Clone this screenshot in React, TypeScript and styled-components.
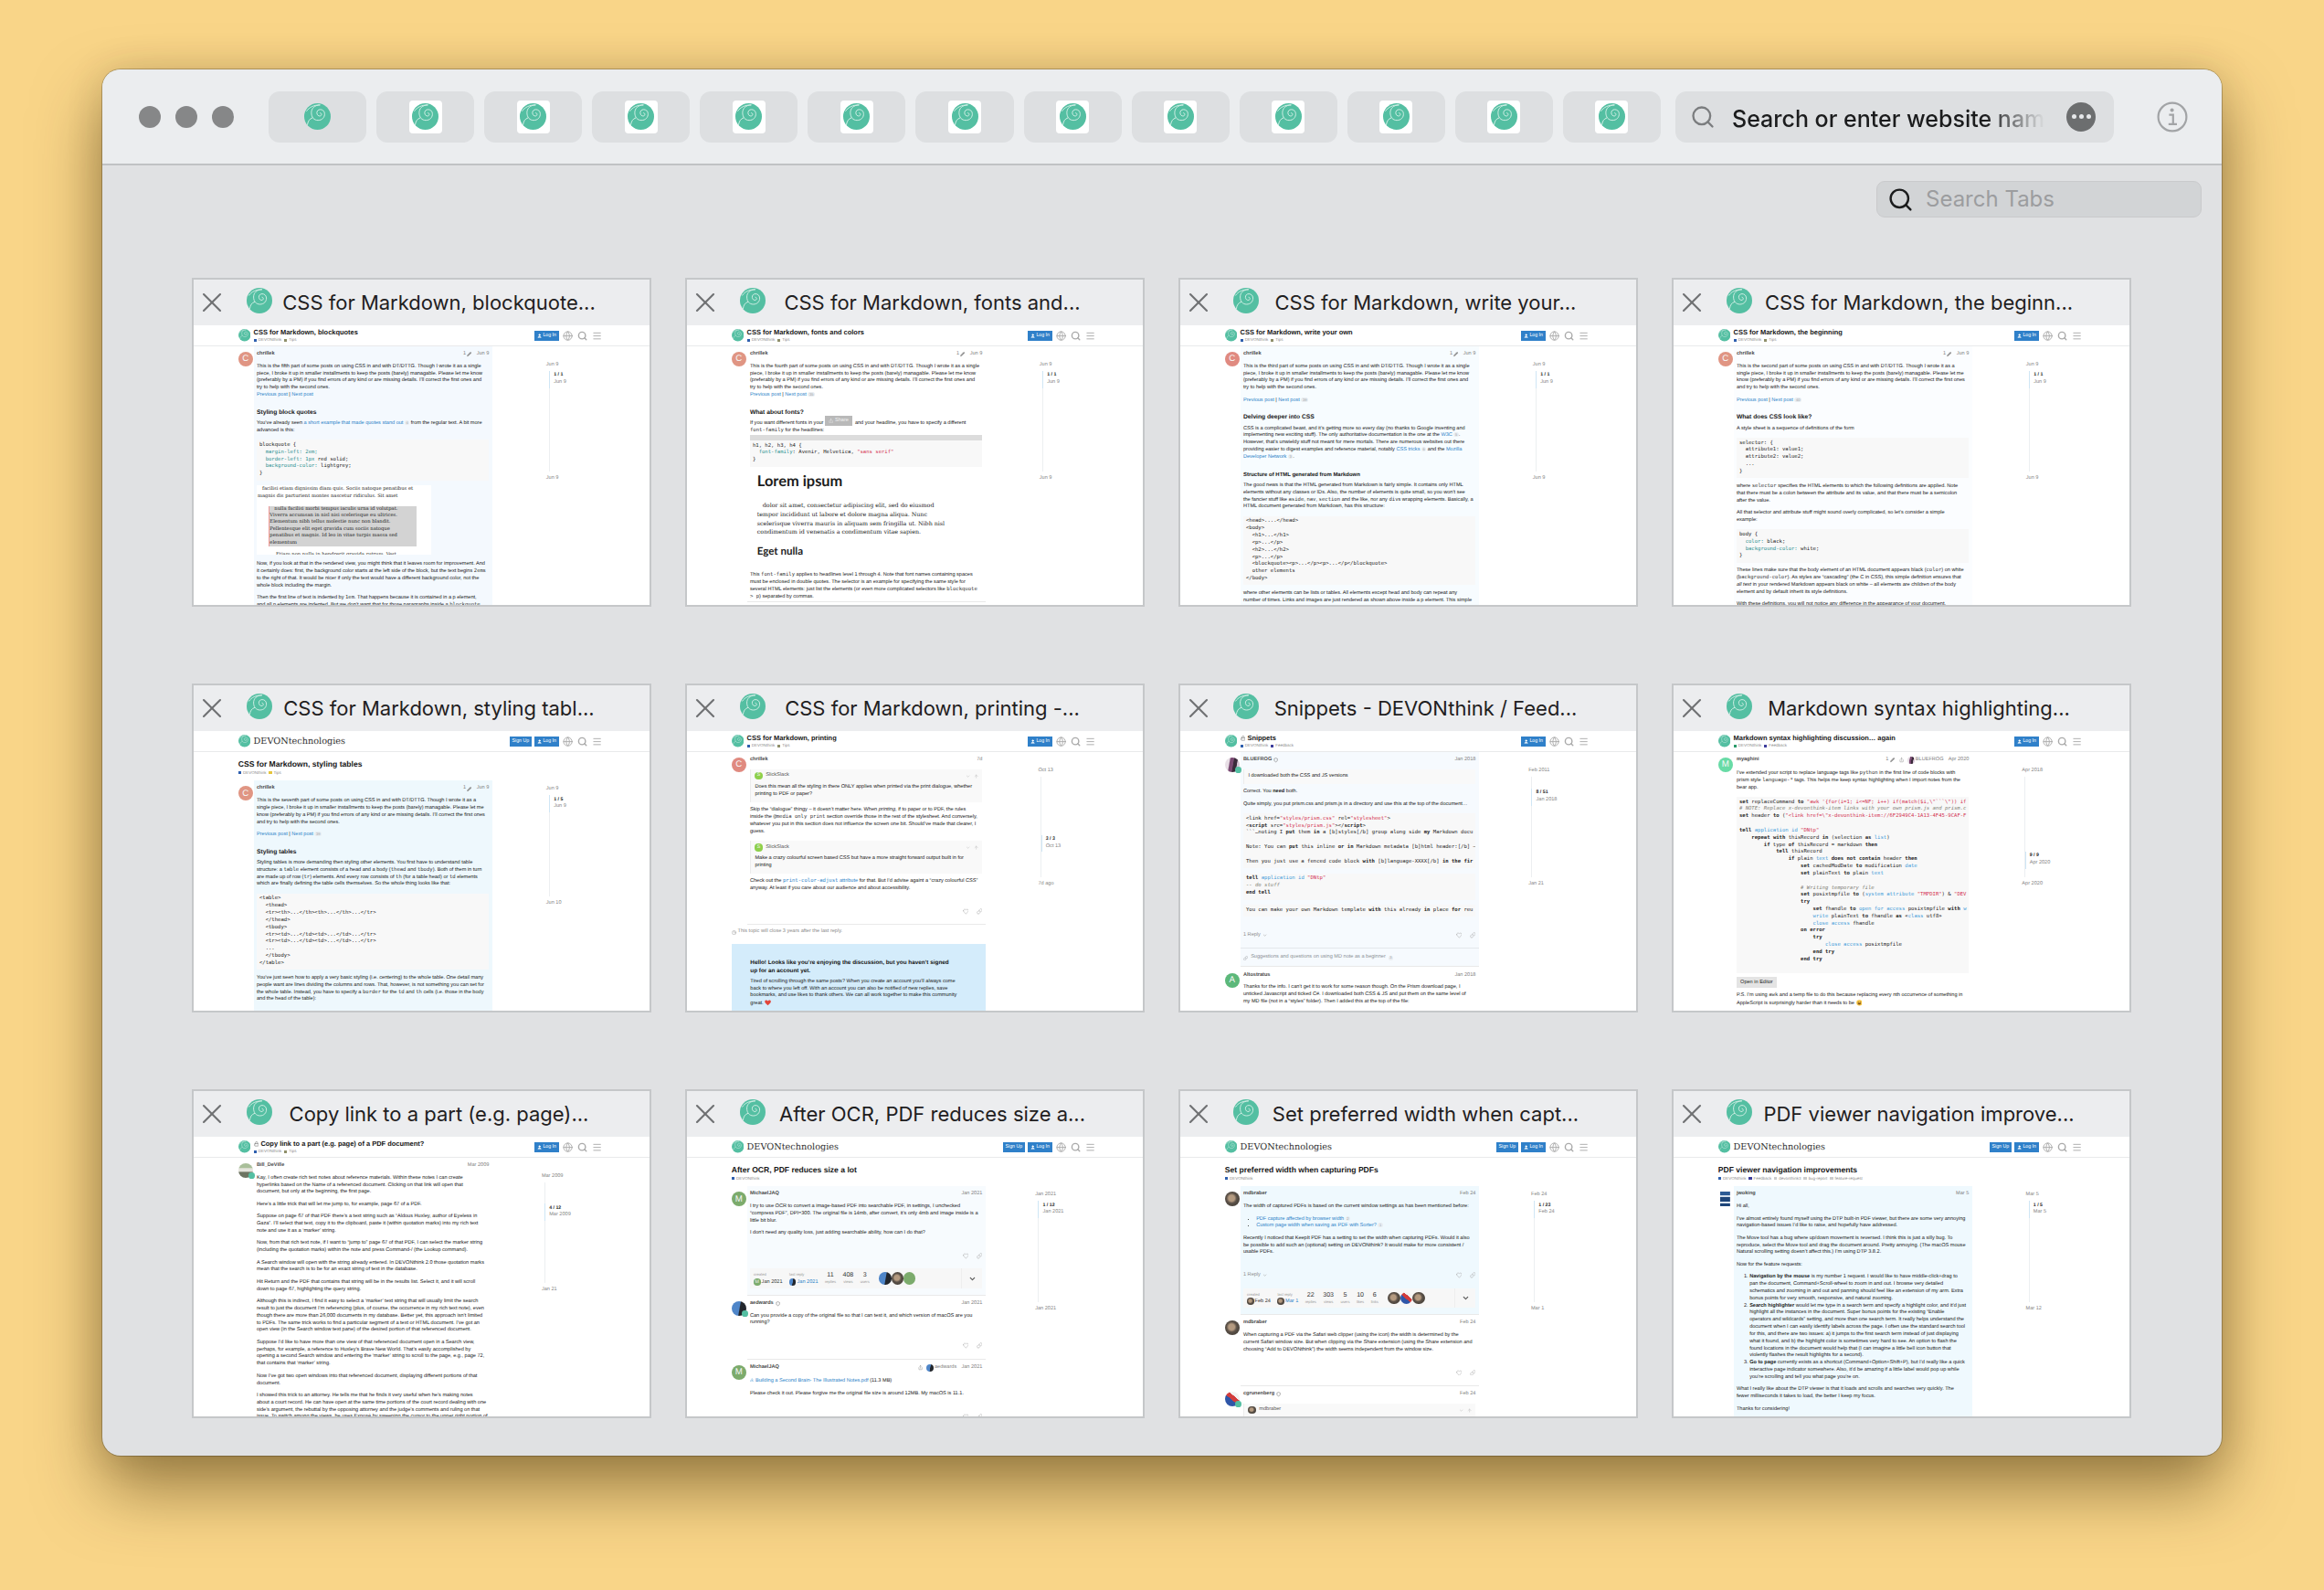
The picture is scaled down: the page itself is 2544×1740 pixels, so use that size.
import React from 'react';
import styled, { createGlobalStyle } from 'styled-components';
import {
  ChevronDown, Clock, Download, Globe, Heart, Link, Lock, Menu, Pencil, Search, Share, Shield, User, ArrowUp, X,
} from 'lucide-react';

const UI = `Inter, "Liberation Sans", sans-serif`;
const SANS = `"Liberation Sans", Arial, sans-serif`;
const MONO = `"DejaVu Sans Mono", "Liberation Mono", monospace`;
const SERIF = `"DejaVu Serif", "Liberation Serif", serif`;
const GREEN = '#54bfa2';

const Global = createGlobalStyle`
  * { box-sizing: border-box; }
  body { margin: 0; background: #f9d588; font-family: ${UI}; }
  h2, h3, h4, p, pre, ul, ol, blockquote { margin: 0; padding: 0; }
  button { font: inherit; border: 0; padding: 0; }
  a { color: inherit; text-decoration: none; }
`;

/* ---------- window ---------- */

const Desktop = styled.div`
  min-height: 100vh;
  padding: 76px 112px 148px;
`;

const Window = styled.main`
  border-radius: 20px;
  overflow: hidden;
  background: #e0e1e3;
  box-shadow: 0 0 0 1px rgba(0, 0, 0, 0.22), 0 36px 72px rgba(60, 40, 0, 0.5), 0 0 40px rgba(60, 40, 0, 0.14);
`;

const Toolbar = styled.header`
  display: flex;
  align-items: center;
  height: 105px;
  padding: 0 37px 0 40px;
  background: #ebedef;
  border-bottom: 2px solid #c0c2c4;
`;

const Lights = styled.div`
  display: flex;
  gap: 16px;
  margin-right: 38px;
`;

const Light = styled.button`
  width: 24px;
  height: 24px;
  border-radius: 50%;
  background: #868788;
`;

const TabStrip = styled.nav`
  flex: 1;
  display: flex;
  gap: 11px;
`;

const Tab = styled.button`
  flex: 1;
  height: 56px;
  border-radius: 12px;
  background: #dddfe1;
  display: flex;
  align-items: center;
  justify-content: center;
`;

const FavTile = styled.span<{ $plain?: boolean }>`
  display: flex;
  align-items: center;
  justify-content: center;
  width: 36px;
  height: 36px;
  border-radius: 4px;
  background: ${(p) => (p.$plain ? 'transparent' : '#fff')};
`;

const AddressBar = styled.label`
  display: flex;
  align-items: center;
  width: 480px;
  height: 56px;
  margin: 0 47px 0 16px;
  padding: 0 20px 0 16px;
  border-radius: 12px;
  background: #dddfe1;
  color: #7b7d7f;
`;

const AddressInput = styled.input`
  flex: 1;
  min-width: 0;
  margin: 4px 20px 0 18px;
  padding: 0;
  border: 0;
  outline: 0;
  background: transparent;
  font: 500 25px/32px ${UI};
  color: #1b1c1d;
  mask-image: linear-gradient(to right, #000 80%, transparent 99%);
  &::placeholder { color: #1b1c1d; opacity: 1; }
`;

const MoreButton = styled.button`
  width: 32px;
  height: 32px;
  border-radius: 50%;
  background: #6c6e6f;
  display: flex;
  align-items: center;
  justify-content: center;
  gap: 3px;
  i { width: 5px; height: 5px; border-radius: 50%; background: #e6e8ea; }
`;

const InfoButton = styled.button`
  display: flex;
  background: transparent;
  color: #a2a4a6;
`;

const SearchRow = styled.div`
  display: flex;
  justify-content: flex-end;
  padding: 17px 22px 0;
`;

const SearchTabs = styled.label`
  display: flex;
  align-items: center;
  gap: 13px;
  width: 356px;
  height: 40px;
  padding: 0 11px;
  border: 1px solid #c9cacc;
  border-radius: 9px;
  background: #d2d4d6;
  color: #1c1d1e;
  input {
    flex: 1;
    min-width: 0;
    padding: 0;
    border: 0;
    outline: 0;
    background: transparent;
    font: 400 24px/30px ${UI};
  }
  input::placeholder { color: #9c9d9f; opacity: 1; }
`;

const Grid = styled.section`
  display: grid;
  grid-template-columns: repeat(4, minmax(0, 1fr));
  gap: 84px 37px;
  padding: 66px 99px 41px 98px;
`;

const Card = styled.article`
  border: 2px solid #c5c7c9;
  background: #fff;
`;

const CardBar = styled.header`
  display: flex;
  align-items: center;
  height: 50px;
  padding: 0 48px 0 2px;
  background: #ecedef;
`;

const CloseButton = styled.button`
  display: flex;
  background: transparent;
  color: #6f7173;
`;

const TabIcon = styled.span`
  display: flex;
  margin: 0 0 4px 20px;
`;

const CardTitle = styled.h2`
  flex: 1;
  min-width: 0;
  text-align: center;
  white-space: nowrap;
  font: 400 22px/30px ${UI};
  color: #1f2021;
`;

/* ---------- page thumbnail: laid out at full size, shown at thumbnail scale ---------- */

const Preview = styled.div`
  height: 306px;
  overflow: hidden;
`;

const Page = styled.div`
  zoom: 0.373;
  font: 15px/21px ${SANS};
  color: #181818;
  text-rendering: geometricPrecision;
`;

const SiteHeader = styled.header`
  height: 61px;
  border-bottom: 2px solid #e9eaeb;
`;

const Wrap = styled.div`
  width: 1076px;
  margin: 0 auto;
`;

const SiteBar = styled(Wrap)`
  height: 60px;
  display: flex;
  align-items: center;
`;

const SiteTitle = styled.div`
  flex: 1;
  margin-left: 9px;
  padding-top: 3px;
`;

const Brand = styled.span`
  font: 400 26px/36px ${SERIF};
  color: #303030;
`;

const Heading = styled.h3<{ $big?: boolean }>`
  display: flex;
  align-items: center;
  gap: 6px;
  font-size: ${(p) => (p.$big ? 23 : 20)}px;
  line-height: ${(p) => (p.$big ? 30 : 24)}px;
  color: #161616;
`;

const Cats = styled.div`
  display: flex;
  gap: 8px;
  font-size: 12px;
  line-height: 20px;
  color: #8c8c8c;
`;

const Cat = styled.span<{ $color: string }>`
  display: flex;
  align-items: center;
  gap: 5px;
  &::before { content: ''; width: 9px; height: 9px; background: ${(p) => p.$color}; }
`;

const SiteButton = styled.button`
  display: flex;
  align-items: center;
  justify-content: center;
  gap: 3px;
  height: 30px;
  margin-right: 8px;
  padding: 0 8px;
  background: #2f80c9;
  color: #fff;
  font-size: 14px;
`;

const SiteIcons = styled.div`
  display: flex;
  gap: 13px;
  margin: 0 8px 0 3px;
  color: #aaa;
`;

const TopicTitle = styled.div`
  height: 84px;
  padding-top: 21px;
`;

const Topic = styled(Wrap)`
  display: flex;
`;

const Stream = styled.div`
  width: 746px;
`;

const PostRow = styled.article`
  display: flex;
`;

const PostSide = styled.div`
  width: 45px;
  padding-top: 17px;
`;

const Avatar = styled.span<{ $bg: string; $size?: number; $square?: boolean }>`
  position: relative;
  display: flex;
  flex: none;
  align-items: center;
  justify-content: center;
  width: ${(p) => p.$size || 43}px;
  height: ${(p) => p.$size || 43}px;
  border-radius: ${(p) => (p.$square ? 0 : '50%')};
  background: ${(p) => p.$bg};
  color: #f6f6f6;
  font-size: ${(p) => (p.$size ? 14 : 26)}px;
`;

const Flair = styled.i`
  position: absolute;
  right: -5px;
  bottom: -2px;
  width: 18px;
  height: 18px;
  border-radius: 50%;
  background: ${GREEN};
`;

const PostBody = styled.div<{ $hl?: string; $last?: boolean }>`
  width: 700px;
  padding: 14px 9px 0;
  background: ${(p) => p.$hl || 'transparent'};
  border-bottom: 1px solid ${(p) => (p.$last ? 'transparent' : '#e9e9e9')};
`;

const NameRow = styled.div`
  display: flex;
  align-items: center;
  gap: 8px;
  height: 22px;
  margin-bottom: 5px;
  color: #808080;
  b { flex: 1; display: flex; align-items: center; gap: 5px; color: #4a4a4a; }
  span { display: flex; align-items: center; gap: 3px; margin-left: 6px; }
`;

const Line = styled.span`
  display: block;
  min-height: 1lh;
`;

const Para = styled.p<{ $mt?: number }>`
  margin-top: ${(p) => p.$mt ?? 15}px;
  white-space: pre;
`;

const Sub = styled.h4<{ $small?: boolean }>`
  margin: 29px 0 -6px;
  font-size: ${(p) => (p.$small ? 16 : 18)}px;
  line-height: 24px;
  color: #161616;
`;

const CodeBox = styled.pre<{ $mt?: number }>`
  margin-top: ${(p) => p.$mt ?? 15}px;
  padding: 7px 8px;
  overflow: hidden;
  background: #f8f8f8;
  font: 15px/21px ${MONO};
  color: #222;
`;

const InlineCode = styled.code`
  font: 15px/20px ${MONO};
  color: #333;
`;

const Anchor = styled.a`
  color: #2a82c8;
  code { color: inherit; }
`;

const Badge = styled.small`
  padding: 0 4px;
  border-radius: 8px;
  background: #e9edf1;
  font-size: 11px;
  line-height: 12px;
  color: #a0a4a8;
`;

const Tok = styled.span<{ $color: string }>`
  color: ${(p) => p.$color};
`;

const QuoteBox = styled.blockquote`
  margin-top: 15px;
  padding: 8px 12px 11px;
  border-left: 5px solid #ececec;
  background: #f9f9f9;
`;

const QuoteHead = styled.div`
  display: flex;
  align-items: center;
  gap: 10px;
  height: 24px;
  margin-bottom: 11px;
  color: #b5b5b5;
  b { flex: 1; font-weight: 400; color: #555; }
`;

const Actions = styled.div`
  display: flex;
  align-items: center;
  gap: 22px;
  height: 30px;
  margin: 40px 0 22px;
  color: #ababab;
  span { flex: 1; display: flex; align-items: center; gap: 6px; color: #8c8c8c; }
`;

const RelatedLink = styled.a`
  display: flex;
  align-items: center;
  gap: 8px;
  margin: 0 -9px;
  padding: 16px 9px 14px;
  border-top: 1px solid #e3e8ec;
  color: #8a9095;
`;

const StatBox = styled.div`
  display: flex;
  align-items: center;
  gap: 20px;
  height: 58px;
  margin-bottom: 18px;
  padding-left: 11px;
  background: #f7f7f7;
  font-size: 14px;
`;

const Stat = styled.div<{ $center?: boolean; $link?: boolean }>`
  display: flex;
  flex-direction: column;
  align-items: ${(p) => (p.$center ? 'center' : 'flex-start')};
  color: ${(p) => (p.$link ? '#2a82c8' : '#333')};
  small { order: ${(p) => (p.$center ? 1 : 0)}; font-size: 11px; line-height: 20px; color: #999; }
  b { display: flex; align-items: center; gap: 3px; font-weight: 400; font-size: ${(p) => (p.$center ? 19 : 15)}px; line-height: 22px; }
`;

const Faces = styled.div`
  flex: 1;
  display: flex;
  margin-left: 8px;
`;

const Expand = styled.button`
  display: flex;
  align-items: center;
  justify-content: center;
  width: 62px;
  height: 58px;
  border-left: 1px solid #eee;
  background: transparent;
  color: #555;
`;

const EditorButton = styled.button`
  display: block;
  height: 32px;
  margin-top: 10px;
  padding: 0 11px;
  background: #e4e4e4;
  color: #222;
`;

const List = styled.ul`
  margin-top: 15px;
  padding-left: 38px;
  white-space: pre;
  li > span:first-child { display: inline-block; vertical-align: top; }
`;

const CloseNote = styled.p`
  display: flex;
  align-items: center;
  gap: 4px;
  padding: 11px 0 24px;
  color: #8a8a8a;
`;

const SignupBox = styled.section`
  padding: 45px 55px 40px;
  background: #d4ecfb;
  white-space: pre;
  h4 { font-size: 17px; line-height: 24px; margin-bottom: 8px; color: #161616; }
`;

const SampleImage = styled.div`
  width: 511px;
  height: 202px;
  margin: 15px 0 20px;
  padding: 3px 3px 0;
  overflow: hidden;
  background: #fff;
  font: 14px/20px ${SERIF};
  white-space: pre;
  color: #222;
`;

const GreyQuote = styled.div`
  width: 434px;
  margin: 17px 0 14px 33px;
  border-left: 1px solid #e99;
  background: #d3d3d3;
`;

const SampleType = styled.div`
  margin: 15px 0 38px;
  padding-left: 21px;
  font: 17px/26px ${SERIF};
  white-space: pre;
  h3 { font: 700 44px/58px Lato, sans-serif; margin-bottom: 30px; color: #1c1c1c; }
  h4 { font: 700 31px/40px Lato, sans-serif; margin-top: 25px; color: #1c1c1c; }
`;

const GreyBar = styled.div`
  height: 17px;
  background: #dcdcdc;
`;

const Selected = styled.span`
  position: relative;
  display: inline-block;
  width: 84px;
  height: 21px;
  vertical-align: top;
`;

const SharePop = styled.button`
  position: absolute;
  left: 0;
  bottom: 5px;
  display: flex;
  align-items: center;
  justify-content: center;
  gap: 4px;
  width: 81px;
  height: 30px;
  background: #b9b9b9;
  color: #f0f0f0;
`;

const Timeline = styled.aside<{ $top: number }>`
  flex: 1;
  display: flex;
  justify-content: center;
  padding: ${(p) => p.$top}px 0 0 44px;
  color: #848484;
`;

const Track = styled.div<{ $offset: number }>`
  height: 295px;
  margin: 8px 0 11px 8px;
  padding-top: ${(p) => p.$offset}px;
  border-left: 2px solid #eceff1;
`;

const Scroller = styled.div`
  margin-left: -2px;
  padding: 3px 0 4px 11px;
  border-left: 3px solid #cfe6f5;
  b { display: block; font-size: 14px; color: #222; }
`;

/* ---------- drawings ---------- */

const Shell = ({ size = 28 }: { size?: number }) => (
  <svg width={size} height={size} viewBox="0 0 28 28" aria-hidden="true">
    <circle cx="14" cy="14" r="14" fill={GREEN} />
    <g fill="none" stroke="#d9f1e9" strokeWidth="0.9" strokeLinecap="round">
      <path d="M3.400 22.600 C4 19 5.400 16.400 8.600 15.400" />
      <path d="M16.400 1.800 C11 2 7.600 5.400 7.600 10 C7.600 14.800 10.400 18 14.600 18 C19 18 21.800 14.800 21.600 11 C21.400 8 19.200 6.600 17 6.600 C14.600 6.600 13.200 8.400 13.400 10.400 C13.600 12.600 15.200 13.800 17 13.400 C18.600 13 18.800 10.400 17 10.200" />
      <path d="M2.600 8.200 C5.400 4.200 10 1.800 16.400 1.800" />
    </g>
  </svg>
);

const InfoIcon = () => (
  <svg width="34" height="34" viewBox="0 0 34 34" fill="none" stroke="currentColor" strokeWidth="2.2">
    <circle cx="17" cy="17" r="15.4" />
    <circle cx="16.6" cy="9.6" r="2" fill="currentColor" stroke="none" />
    <path d="M13.4 14.6 H17.8 V24.6 M12.8 24.8 H22" />
  </svg>
);

const Inline = styled.svg`
  vertical-align: middle;
`;

const RedHeart = () => (
  <Inline width="19" height="18" viewBox="0 0 19 18">
    <path d="M9.500 17 C2 11 0 8 .6 4.600 C1.400 .6 7 -.4 9.500 4 C12 -.4 17.600 .6 18.400 4.600 C19 8 17 11 9.500 17Z" fill="#e2463b" />
  </Inline>
);

const Smiley = () => (
  <Inline width="18" height="18" viewBox="0 0 18 18">
    <circle cx="9" cy="9" r="8.500" fill="#f5c542" />
    <path d="M4 9.500 H14 C14 16 4 16 4 9.500Z" fill="#7a4a1c" />
    <path d="M5 6.500 H7.500 M10.500 6.500 H13" stroke="#7a4a1c" strokeWidth="1.500" />
  </Inline>
);

/* ---------- text helpers ---------- */

/* {{x|text}} marks a run: a link, d link in code type, b bold, i italic, c code, n count badge,
   e drawn emoji or icon, others are syntax colours */
const COLORS: Record<string, string> = { t: '#2a9090', r: '#d3304f', s: '#3f9bd8', g: '#808075' };

const run = (part: string, i: number): React.ReactNode => {
  const m = /^\{\{(\w)\|([\s\S]*)\}\}$/.exec(part);
  if (!m) return part;
  const [, kind, text] = m;
  if (kind === 'a') return <Anchor key={i} href="#">{text}</Anchor>;
  if (kind === 'd') return <Anchor key={i} href="#"><InlineCode>{text}</InlineCode></Anchor>;
  if (kind === 'b') return <b key={i}>{text}</b>;
  if (kind === 'i') return <i key={i}>{text}</i>;
  if (kind === 'c') return <InlineCode key={i}>{text}</InlineCode>;
  if (kind === 'n') return <Badge key={i}>{text}</Badge>;
  if (kind === 'e') {
    if (text === 'heart') return <RedHeart key={i} />;
    if (text === 'smile') return <Smiley key={i} />;
    if (text === 'download') return <Download key={i} size={12} color="#3a8fd0" />;
    return <Selected key={i}><SharePop><Share size={14} />Share</SharePop></Selected>;
  }
  if (kind === 'g') return <Tok key={i} as="i" $color={COLORS.g}>{text}</Tok>;
  return <Tok key={i} $color={COLORS[kind]}>{text}</Tok>;
};

const rich = (src: string) =>
  src.split('\n').map((line, n) => <Line key={n}>{line.split(/(\{\{\w\|.*?\}\})/).filter(Boolean).map(run)}</Line>);

const P = ({ children, mt }: { children: string; mt?: number }) => <Para $mt={mt}>{rich(children)}</Para>;
const Code = ({ children, mt }: { children: string; mt?: number }) => <CodeBox $mt={mt}>{rich(children)}</CodeBox>;

/* ---------- thumbnail parts ---------- */

const FACES = {
  chr: '#e09583',
  alt: '#5cb87a',
  my: '#68dba6',
  mj: '#7cab6c',
  blue: 'linear-gradient(100deg, #e8dfe6 0 28%, #7a4a72 34% 52%, #3a2a3a 56% 74%, #d8c8d8 78%)',
  bill: 'linear-gradient(180deg, #a9bf9a 0 30%, #e4e4dc 36% 55%, #6d7461 62%)',
  aed: 'linear-gradient(100deg, #4f86c9 0 50%, #22262c 56%)',
  mdb: 'radial-gradient(circle at 45% 45%, #b49a80 0 26%, #5b5148 45%, #37332d)',
  cgr: 'linear-gradient(40deg, #2f56a8 0 45%, #d23c3c 46% 66%, #f2f2f2 67%)',
  jwo: 'linear-gradient(180deg, #2b5a94 0 24%, #cfdcea 25% 38%, #1d4478 39% 70%, #e8f0f8 71% 78%, #1d4478 79%) center / 68% 100% no-repeat',
};

type CatDef = [string, string];
const THINK: CatDef = ['DEVONthink', '#2f5fae'];
const TIPS: CatDef = ['Tips', '#8f8f6a'];
const TIPS_Y: CatDef = ['Tips', '#e6c53c'];
const FEEDBACK: CatDef = ['Feedback', '#3d3d9c'];

const CatList = ({ cats }: { cats: CatDef[] }) => (
  <Cats>{cats.map(([label, color]) => <Cat key={label} $color={color}>{label}</Cat>)}</Cats>
);

type SiteProps = {
  title: string; cats: CatDef[]; top?: boolean; locked?: boolean;
  from: string; to: string; pos: string; at: string; offset?: number; children: React.ReactNode;
};

const Site = ({ title, cats, top, locked, from, to, pos, at, offset = 0, children }: SiteProps) => (
  <Page>
    <SiteHeader>
      <SiteBar>
        <Shell size={36} />
        <SiteTitle>
          {top ? <Brand>DEVONtechnologies</Brand> : (
            <>
              <Heading>{locked && <Lock size={15} color="#888" strokeWidth={3} />}{title}</Heading>
              <CatList cats={cats} />
            </>
          )}
        </SiteTitle>
        {top && <SiteButton>Sign Up</SiteButton>}
        <SiteButton><User size={14} fill="#fff" />Log In</SiteButton>
        <SiteIcons><Globe size={30} /><Search size={30} strokeWidth={3} /><Menu size={30} /></SiteIcons>
      </SiteBar>
    </SiteHeader>
    {top && (
      <Wrap>
        <TopicTitle><Heading $big>{title}</Heading><CatList cats={cats} /></TopicTitle>
      </Wrap>
    )}
    <Topic>
      <Stream>{children}</Stream>
      <Timeline $top={top ? 15 : 45}>
        <div>
          {from}
          <Track $offset={offset}><Scroller><b>{pos}</b>{at}</Scroller></Track>
          {to}
        </div>
      </Timeline>
    </Topic>
  </Page>
);

type PostProps = {
  face: string; letter?: string; name: string; date: string; edits?: boolean; shield?: boolean; flair?: boolean;
  square?: boolean; replyTo?: [string, string]; hl?: string; last?: boolean; children?: React.ReactNode;
};

const Post = ({ face, letter, name, date, edits, shield, flair, square, replyTo, hl, last, children }: PostProps) => (
  <PostRow>
    <PostSide><Avatar $bg={face} $square={square}>{letter}{flair && <Flair />}</Avatar></PostSide>
    <PostBody $hl={hl} $last={last}>
      <NameRow>
        <b>{name}{shield && <Shield size={14} />}</b>
        {edits && <span>1 <Pencil size={14} fill="#999" /></span>}
        {replyTo && <span><Share size={14} /><Avatar $bg={replyTo[1]} $size={22} />{replyTo[0]}</span>}
        <span>{date}</span>
      </NameRow>
      {children}
    </PostBody>
  </PostRow>
);

const Tools = ({ reply }: { reply?: boolean }) => (
  <Actions><span>{reply && <>1 Reply <ChevronDown size={14} /></>}</span><Heart size={18} /><Link size={18} /></Actions>
);

const Quote = ({ who, face, letter, children }: { who?: string; face?: string; letter?: string; children?: string }) => (
  <QuoteBox>
    {who && (
      <QuoteHead>
        <Avatar $bg={face || '#8ed04b'} $size={22}>{letter}</Avatar><b>{who}</b><ChevronDown size={14} /><ArrowUp size={14} />
      </QuoteHead>
    )}
    {children && <P mt={who ? 0 : 3}>{children}</P>}
  </QuoteBox>
);

type StatsProps = { a: [string, string, string]; b: [string, string, string]; nums: [string, string][]; faces: string[] };
const Stats = ({ a, b, nums, faces }: StatsProps) => (
  <StatBox>
    <Stat><small>created</small><b><Avatar $bg={a[0]} $size={20}>{a[1]}</Avatar>{a[2]}</b></Stat>
    <Stat $link><small>last reply</small><b><Avatar $bg={b[0]} $size={20} />{b[2]}</b></Stat>
    {nums.map(([n, label]) => <Stat key={label} $center><small>{label}</small><b>{n}</b></Stat>)}
    <Faces>{faces.map((f, i) => <Avatar key={i} $bg={f} $size={36} />)}</Faces>
    <Expand aria-label="Expand"><ChevronDown size={24} strokeWidth={3} /></Expand>
  </StatBox>
);

/* ---------- the twelve pages ---------- */

const Blockquotes = () => (
  <Site title="CSS for Markdown, blockquotes" cats={[THINK, TIPS]} from="Jun 9" to="Jun 9" pos="1 / 1" at="Jun 9">
    <Post face={FACES.chr} letter="C" name="chrillek" date="Jun 9" edits hl="#f4f9fe">
      <P>{`This is the fifth part of some posts on using CSS in and with DT/DTTG. Though I wrote it as a single
piece, I broke it up in smaller installments to keep the posts (barely) managable. Please let me know
(preferably by a PM) if you find errors of any kind or are missing details. I’ll correct the first ones and
try to help with the second ones.
{{a|Previous post}} | {{a|Next post}}`}</P>
      <Sub>Styling block quotes</Sub>
      <P>{`You’ve already seen {{a|a short example that made quotes stand out}} {{n|4}} from the regular text. A bit more
advanced is this:`}</P>
      <Code>{`blockquote {
  {{t|margin-left: 2em;}}
  {{t|border-left: 1px}} red solid;
  {{t|background-color:}} lightgrey;
}`}</Code>
      <SampleImage>
        {rich(`   facilisi etiam dignissim diam quis. Sociis natoque penatibus et
magnis dis parturient montes nascetur ridiculus. Sit amet`)}
        <GreyQuote>
          {rich(`   nulla facilisi morbi tempus iaculis urna id volutpat.
Viverra accumsan in nisl nisi scelerisque eu ultrices.
Elementum nibh tellus molestie nunc non blandit.
Pellentesque elit eget gravida cum sociis natoque
penatibus et magnis. Id leo in vitae turpis massa sed
elementum`)}
        </GreyQuote>
        {rich('            Etiam non nulla in hendrerit gravida rutrum. Vest')}
      </SampleImage>
      <P mt={20}>{`Now, if you look at that in the rendered view, you might think that it leaves room for improvement. And
it certainly does: first, the background color starts at the left side of the block, but the text begins {{c|2em}}s
to the right of that. It would be nicer if only the text would have a different background color, not the
whole block including the margin.`}</P>
      <P>{`Then the first line of text is indented by {{c|1em}}. That happens because it is contained in a p element,
and all p elements are indented. But we don’t want that for those paragraphs inside a {{c|blockquote}}.`}</P>
    </Post>
  </Site>
);

const Fonts = () => (
  <Site title="CSS for Markdown, fonts and colors" cats={[THINK, TIPS]} from="Jun 9" to="Jun 9" pos="1 / 1" at="Jun 9">
    <Post face={FACES.chr} letter="C" name="chrillek" date="Jun 9" edits>
      <P>{`This is the fourth part of some posts on using CSS in and with DT/DTTG. Though I wrote it as a single
piece, I broke it up in smaller installments to keep the posts (barely) managable. Please let me know
(preferably by a PM) if you find errors of any kind or are missing details. I’ll correct the first ones and
try to help with the second ones.
{{a|Previous post}} | {{a|Next post}} {{n|35}}`}</P>
      <Sub>What about fonts?</Sub>
      <P>{`If you want different fonts in your {{e|share}} and your headline, you have to specify a different
{{c|font-family}} for the headlines:`}</P>
      <GreyBar />
      <Code mt={0}>{`h1, h2, h3, h4 {
  {{t|font-family}}: Avenir, Helvetica, {{r|"sans serif"}}
}`}</Code>
      <SampleType>
        <h3>Lorem ipsum</h3>
        {rich(`   dolor sit amet, consectetur adipiscing elit, sed do eiusmod
tempor incididunt ut labore et dolore magna aliqua. Nunc
scelerisque viverra mauris in aliquam sem fringilla ut. Nibh nisl
condimentum id venenatis a condimentum vitae sapien.`)}
        <h4>Eget nulla</h4>
      </SampleType>
      <P mt={0}>{`This {{c|font-family}} applies to headlines level 1 through 4. Note that font names containing spaces
must be enclosed in double quotes. The selector is an example for specifying the same style for
several HTML elements: just list the elements (or even more complicated selectors like {{c|blockquote}}
{{c|> p}}) separated by commas.`}</P>
    </Post>
  </Site>
);

const WriteOwn = () => (
  <Site title="CSS for Markdown, write your own" cats={[THINK, TIPS]} from="Jun 9" to="Jun 9" pos="1 / 1" at="Jun 9">
    <Post face="#e08a80" letter="C" name="chrillek" date="Jun 9" edits hl="#f7fcff">
      <P>{`This is the third part of some posts on using CSS in and with DT/DTTG. Though I wrote it as a single
piece, I broke it up in smaller installments to keep the posts (barely) managable. Please let me know
(preferably by a PM) if you find errors of any kind or are missing details. I’ll correct the first ones and
try to help with the second ones.`}</P>
      <P>{`{{a|Previous post}} | {{a|Next post}} {{n|39}}`}</P>
      <Sub>Delving deeper into CSS</Sub>
      <P>{`CSS is a complicated beast, and it’s getting more so every day (no thanks to Google inventing and
implementing new exciting stuff). The only authoritative documentation is the one at the {{a|W3C}} {{n|5}}.
However, that’s unwieldy stuff not meant for mere mortals. There are numerous websites out there
providing easier to digest examples and reference material, notably {{a|CSS tricks}} {{n|6}} and the {{a|Mozilla}}
{{a|Developer Network}} {{n|3}}.`}</P>
      <Sub $small>Structure of HTML generated from Markdown</Sub>
      <P>{`The good news is that the HTML generated from Markdown is fairly simple. It contains only HTML
elements without any classes or IDs. Also, the number of elements is quite small, so you won’t see
the fancier stuff like {{c|aside}}, {{c|nav}}, {{c|section}} and the like, nor any {{c|div}}s wrapping elements. Basically, a
HTML document generated from Markdown, has this structure:`}</P>
      <Code>{`<head>....</head>
<body>
  <h1>...</h1>
  <p>...</p>
  <h2>...</h2>
  <p>...</p>
  <blockquote><p>...</p><p>...</p</blockquote>
  other elements
</body>`}</Code>
      <P>{`where other elements can be lists or tables. All elements except head and body can repeat any
number of times. Links and images are just rendered as shown above inside a p element. This simple`}</P>
    </Post>
  </Site>
);

const Beginning = () => (
  <Site title="CSS for Markdown, the beginning" cats={[THINK, TIPS]} from="Jun 9" to="Jun 9" pos="1 / 1" at="Jun 9">
    <Post face={FACES.chr} letter="C" name="chrillek" date="Jun 9" edits hl="#fbfdff">
      <P>{`This is the second part of some posts on using CSS in and with DT/DTTG. Though I wrote it as a
single piece, I broke it up in smaller installments to keep the posts (barely) managable. Please let me
know (preferably by a PM) if you find errors of any kind or are missing details. I’ll correct the first ones
and try to help with the second ones.`}</P>
      <P>{`{{a|Previous post}} | {{a|Next post}} {{n|40}}`}</P>
      <Sub>What does CSS look like?</Sub>
      <P>A style sheet is a sequence of definitions of the form</P>
      <Code>{`selector: {
  attribute1: value1;
  attribute2: value2;
  ...
}`}</Code>
      <P>{`where {{c|selector}} specifies the HTML elements to which the following definitions are applied. Note
that there must be a colon between the attribute and its value, and that there must be a semicolon
after the value.`}</P>
      <P>{`All that selector and attribute stuff might sound overly complicated, so let’s consider a simple
example:`}</P>
      <Code>{`body {
  {{t|color:}} black;
  {{t|background-color:}} white;
}`}</Code>
      <P>{`These lines make sure that the body element of an HTML document appears black ({{c|color}}) on white
({{c|background-color}}). As styles are “cascading” (the C in CSS), this simple definition ensures that
{{i|all text}} in your rendered Markdown appears black on white – all elements are children of the body
element and by default inherit its style definitions.`}</P>
      <P>With these definitions, you will not notice any difference in the appearance of your document.</P>
    </Post>
  </Site>
);

const Tables = () => (
  <Site top title="CSS for Markdown, styling tables" cats={[THINK, TIPS_Y]} from="Jun 9" to="Jun 10" pos="1 / 5" at="Jun 9">
    <Post face={FACES.chr} letter="C" name="chrillek" date="Jun 9" edits hl="#eef8fd">
      <P>{`This is the seventh part of some posts on using CSS in and with DT/DTTG. Though I wrote it as a
single piece, I broke it up in smaller installments to keep the posts (barely) managable. Please let me
know (preferably by a PM) if you find errors of any kind or are missing details. I’ll correct the first ones
and try to help with the second ones.`}</P>
      <P>{`{{a|Previous post}} | {{a|Next post}} {{n|39}}`}</P>
      <Sub>Styling tables</Sub>
      <P>{`Styling tables is more demanding then styling other elements. You first have to understand table
structure: a {{c|table}} element consists of a head and a body ({{c|thead}} and {{c|tbody}}). Both of them in turn
are made up of row ({{c|tr}}) elements. And every row consists of {{c|th}} (for a table head) or {{c|td}} elements
which are finally defining the table cells themselves. So the whole thing looks like that:`}</P>
      <Code>{`<table>
  <thead>
  <tr><th>...</th><th>...</th>...</tr>
  </thead>
  <tbody>
  <tr><td>...</td><td>...</td>...</tr>
  <tr><td>...</td><td>...</td>...</tr>
  ...
  </tbody>
</table>`}</Code>
      <P>{`You’ve just seen how to apply a very basic styling (i.e. centering) to the whole table. One detail many
people want are lines dividing the columns and rows. That, however, is not something you can set for
the whole table. Instead, you have to specify a {{c|border}} for the {{c|td}} and {{c|th}} cells (i.e. those in the body
and the head of the table):

`}</P>
    </Post>
  </Site>
);

const Printing = () => (
  <Site title="CSS for Markdown, printing" cats={[THINK, TIPS]} from="Oct 13" to="7d ago" pos="3 / 3" at="Oct 13" offset={170}>
    <Post face="#e08a80" letter="C" name="chrillek" date="7d">
      <Quote who="SlickSlack" letter="S">{`Does this mean all the styling in there ONLY applies when printed via the print dialogue, whether
printing to PDF or paper?`}</Quote>
      <P>{`Skip the “dialogue” thingy – it doesn’t matter here. When {{i|printing}}, if to paper or to PDF, the rules
inside the {{c|@media only print}} section override those in the rest of the stylesheet. And conversely,
whatever you put in this section does not influence the screen one bit. Should’ve made that clearer, I
guess.`}</P>
      <Quote who="SlickSlack" letter="S">{`Make a crazy colourful screen based CSS but have a more straight forward output built in for
printing`}</Quote>
      <P>{`Check out the {{d|print-color-adjust}}{{a| attribute}} for that. But I’d advise againt a “crazy colourful CSS”
anyway. At least if you care about our audience and about accessibility.`}</P>
      <Tools />
    </Post>
    <CloseNote><Clock size={14} />This topic will close 3 years after the last reply.</CloseNote>
    <SignupBox>
      <h4>{rich(`Hello! Looks like you’re enjoying the discussion, but you haven’t signed
up for an account yet.`)}</h4>
      <p>{rich(`Tired of scrolling through the same posts? When you create an account you’ll always come
back to where you left off. With an account you can also be notified of new replies, save
bookmarks, and use likes to thank others. We can all work together to make this community
great. {{e|heart}}`)}</p>
    </SignupBox>
  </Site>
);

const Snippets = () => (
  <Site locked title="Snippets" cats={[THINK, FEEDBACK]} from="Feb 2011" to="Jan 21" pos="8 / 51" at="Jan 2018" offset={35}>
    <Post face={FACES.blue} flair name="BLUEFROG" shield date="Jan 2018" hl="#f6fafe">
      <Quote>I downloaded both the CSS and JS versions</Quote>
      <P>{`Correct. You {{b|need}} both.`}</P>
      <P>Quite simply, you put prism.css and prism.js in a directory and use this at the top of the document…</P>
      <Code>{`<link href={{r|"styles/prism.css"}} rel={{r|"stylesheet"}}>
<{{b|script}} src={{r|"styles/prism.js"}}></{{b|script}}>
\`\`\`…noting I {{b|put}} them {{b|in}} a [b]styles[/b] group along side {{b|my}} Markdown docu

Note: You can {{b|put}} this inline {{b|or}} {{b|in}} Markdown metadata [b]html header:[/b] –

Then you just use a fenced code block {{b|with}} [b]language-XXXX[/b] {{b|in the fir}}`}</Code>
      <Code>{`{{b|tell}} {{s|application}} {{s|id}} {{r|"DNtp"}}
{{g|-- do stuff}}
{{b|end}} {{b|tell}}`}</Code>
      <Code>{`You can make your own Markdown template {{b|with}} this already {{b|in}} place {{b|for}} reu`}</Code>
      <Tools reply />
      <RelatedLink href="#"><Link size={14} />Suggestions and questions on using MD note as a beginner <Badge>3</Badge></RelatedLink>
    </Post>
    <Post face={FACES.alt} letter="A" name="Altostratus" date="Jan 2018" last>
      <P>{`Thanks for the info. I can’t get it to work for some reason though. On the Prism download page, I
unticked Javascript and ticked C#. I downloaded both CSS & JS and put them on the same level of
my MD file (not in a “styles” folder). Then I added this at the top of the file:`}</P>
    </Post>
  </Site>
);

const Syntax = () => (
  <Site title="Markdown syntax highlighting discussion… again" cats={[['DEVONthink', '#2b9a6a'], FEEDBACK]}
    from="Apr 2018" to="Apr 2020" pos="9 / 9" at="Apr 2020" offset={220}>
    <Post face={FACES.my} letter="M" name="myaghini" date="Apr 2020" edits replyTo={['BLUEFROG', FACES.blue]} last>
      <P mt={18}>{`I’ve extended your script to replace language tags like {{c|python}} in the first line of code blocks with
prism style {{c|language-*}} tags. This helps me keep syntax highlighting when I import notes from the
bear app.`}</P>
      <Code>{`{{b|set}} replaceCommand {{b|to}} {{r|"awk '{for(i=1; i<=NF; i++) if(match($i,\\"\`\`\`\\")) if}}
{{g|# NOTE: Replace x-devonthink-item links with your own prism.js and prism.c}}
{{b|set}} header {{b|to}} ({{r|"<link href=\\"x-devonthink-item://6F2949C4-1A13-4F45-9CAF-F}}

{{b|tell}} {{s|application}} {{s|id}} {{r|"DNtp"}}
    {{b|repeat}} {{b|with}} thisRecord {{b|in}} (selection {{b|as}} {{s|list}})
        {{b|if}} type {{b|of}} thisRecord = markdown {{b|then}}
            {{b|tell}} thisRecord
                {{b|if}} plain {{s|text}} {{b|does not contain}} header {{b|then}}
                    {{b|set}} cachedModDate {{b|to}} modification {{s|date}}
                    {{b|set}} plainText {{b|to}} plain {{s|text}}

                    {{g|# Writing temporary file}}
                    {{b|set}} posixtmpfile {{b|to}} ({{s|system attribute}} {{r|"TMPDIR"}}) & {{r|"DEV}}
                    {{b|try}}
                        {{b|set}} fhandle {{b|to}} {{s|open for access}} posixtmpfile {{b|with}} {{s|w}}
                        {{s|write}} plainText {{b|to}} fhandle {{b|as}} «{{s|class}} utf8»
                        {{s|close access}} fhandle
                    {{b|on}} {{b|error}}
                        {{b|try}}
                            {{s|close access}} posixtmpfile
                        {{b|end}} {{b|try}}
                    {{b|end}} {{b|try}}
`}</Code>
      <EditorButton>Open in Editor</EditorButton>
      <P>{`P.S. I’m using {{c|awk}} and a temp file to do this because replacing every nth occurrence of something in
AppleScript is surprisingly harder than it needs to be {{e|smile}}`}</P>
    </Post>
  </Site>
);

const CopyLink = () => (
  <Site locked title="Copy link to a part (e.g. page) of a PDF document?" cats={[THINK, TIPS]}
    from="Mar 2009" to="Jan 21" pos="4 / 12" at="Mar 2009" offset={62}>
    <Post face={FACES.bill} flair name="Bill_DeVille" date="Mar 2009">
      <P>{`Kay, I often create rich text notes about reference materials. Within these notes I can create
hyperlinks based on the Name of a referenced document. Clicking on that link will open that
document, but only at the beginning, the first page.`}</P>
      <P>Here’s a little trick that will let me jump to, for example, page 67 of a PDF.</P>
      <P>{`Suppose on page 67 of that PDF there’s a text string such as “Aldous Huxley, author of Eyeless in
Gaza”. I’ll select that text, copy it to the clipboard, paste it (within quotation marks) into my rich text
note and use it as a ‘marker’ string.`}</P>
      <P>{`Now, from that rich text note, if I want to “jump to” page 67 of that PDF, I can select the marker string
(including the quotation marks) within the note and press Command-/ (the Lookup command).`}</P>
      <P>{`A Search window will open with the string already entered. In DEVONthink 2.0 those quotation marks
mean that the search is to be for an exact string of text in the database.`}</P>
      <P>{`Hit Return and the PDF that contains that string will be in the results list. Select it, and it will scroll
down to page 67, highlighting the query string.`}</P>
      <P>{`Although this is indirect, I find it easy to select a ‘marker’ text string that will usually limit the search
result to just the document I’m referencing (plus, of course, the occurrence in my rich text note), even
though there are more than 26,000 documents in my database. Better yet, this approach isn’t limited
to PDFs. The same trick works to find a particular segment of a text or HTML document. I’ve got an
open view (in the Search window text pane) of the desired portion of that referenced document.`}</P>
      <P>{`Suppose I’d like to have more than one view of that referenced document open in a Search view,
perhaps, for example, a reference to Huxley’s Brave New World. That’s easily accomplished by
opening a second Search window and entering the ‘marker’ string to scroll to the page, e.g., page 72,
that contains that ‘marker’ string.`}</P>
      <P>{`Now I’ve got two open windows into that referenced document, displaying different portions of that
document.`}</P>
      <P>{`I showed this trick to an attorney. He tells me that he finds it very useful when he’s making notes
about a court record. He can have open at the same time portions of the court record dealing with one
side’s argument, the rebuttal by the opposing attorney and the judge’s comments and ruling on that
issue. To switch among the views, he uses Exposé by sweeping the cursor to the upper right portion of`}</P>
    </Post>
  </Site>
);

const Ocr = () => (
  <Site top title="After OCR, PDF reduces size a lot" cats={[THINK]} from="Jan 2021" to="Jan 2021" pos="1 / 12" at="Jan 2021">
    <Post face={FACES.mj} letter="M" name="MichaelJAQ" date="Jan 2021" hl="#f7fbfe">
      <P>{`I try to use OCR to convert a image-based PDF into searchable PDF, in settings, I unchecked
“compress PDF”, DPI=300. The original file is 14mb, after convert, it’s only 4mb and image inside is a
little bit blur.`}</P>
      <P>I don’t need any quality loss, just adding searchable ability, how can I do that?</P>
      <Tools />
      <Stats a={[FACES.mj, 'M', 'Jan 2021']} b={[FACES.aed, '', 'Jan 2021']}
        nums={[['11', 'replies'], ['408', 'views'], ['3', 'users']]} faces={[FACES.aed, FACES.mdb, FACES.mj]} />
    </Post>
    <Post face={FACES.aed} flair name="aedwards" shield date="Jan 2021">
      <P>{`Can you provide a copy of the original file so that I can test it, and which version of macOS are you
running?`}</P>
      <Tools />
    </Post>
    <Post face={FACES.mj} letter="M" name="MichaelJAQ" date="Jan 2021" replyTo={['aedwards', FACES.aed]} last>
      <P mt={18}>{`{{e|download}}{{a| Building a Second Brain- The Illustrated Notes.pdf}} (11.3 MB)`}</P>
      <P>Please check it out. Please forgive me the original file size is around 12MB. My macOS is 11.1.</P>
      <Tools />
    </Post>
  </Site>
);

const PreferredWidth = () => (
  <Site top title="Set preferred width when capturing PDFs" cats={[THINK]} from="Feb 24" to="Mar 1" pos="1 / 23" at="Feb 24">
    <Post face={FACES.mdb} name="mdbraber" date="Feb 24" hl="#eff9fe">
      <P>The width of captured PDFs is based on the current window settings as has been mentioned before:</P>
      <List>
        <li>{rich('{{a|PDF capture affected by browser width}} {{n|2}}')}</li>
        <li>{rich('{{a|Custom page width when saving as PDF with Sorter?}} {{n|1}}')}</li>
      </List>
      <P>{`Recently I noticed that KeepIt PDF has a setting to set the width when capturing PDFs. Would it also
be possible to add such an (optional) setting on DEVONthink? It would make for more consistent /
usable PDFs.`}</P>
      <Tools reply />
      <Stats a={[FACES.mdb, '', 'Feb 24']} b={[FACES.mdb, '', 'Mar 1']}
        nums={[['22', 'replies'], ['303', 'views'], ['5', 'users'], ['10', 'likes'], ['6', 'links']]}
        faces={[FACES.mdb, FACES.cgr, FACES.mdb]} />
    </Post>
    <Post face={FACES.mdb} name="mdbraber" date="Feb 24">
      <P>{`When capturing a PDF via the Safari web clipper (using the icon) the width is determined by the
current Safari window size. But when clipping via the Share extension (using the Share extension and
choosing “Add to DEVONthink”) the width seems independent from the window size.`}</P>
      <Tools />
    </Post>
    <Post face={FACES.cgr} flair name="cgrunenberg" shield date="Feb 24" last>
      <Quote who="mdbraber" face={FACES.mdb} />
    </Post>
  </Site>
);

const Navigation = () => (
  <Site top title="PDF viewer navigation improvements"
    cats={[THINK, FEEDBACK, ['devonthink3', '#ccc'], ['bug-report', '#ccc'], ['feature-request', '#ccc']]}
    from="Mar 5" to="Mar 12" pos="1 / 5" at="Mar 5">
    <Post face={FACES.jwo} square name="jwoking" date="Mar 5" hl="#eff9fe">
      <P>Hi all,</P>
      <P>{`I’ve almost entirely found myself using the DTP built-in PDF viewer, but there are some very annoying
navigation-based issues I’d like to raise, and hopefully have addressed.`}</P>
      <P>{`The Move tool has a bug where up/down movement is reversed. I think this is just a silly bug. To
reproduce, select the Move tool and drag the document around. Pretty annoying. (The macOS mouse
Natural scrolling setting doesn’t affect this.) I’m using DTP 3.8.2.`}</P>
      <P>Now for the feature requests:</P>
      <List as="ol">
        <li>{rich(`{{b|Navigation by the mouse}} is my number 1 request. I would like to have middle-click+drag to
pan the document, Command+Scroll-wheel to zoom in and out. I browse very detailed
schematics and zooming in and out and panning should feel like an extension of my arm. Extra
bonus points for very smooth, responsive, and natural zooming.`)}</li>
        <li>{rich(`{{b|Search highlighter}} would let me type in a search term and specify a highlight color, and it’d just
highlight all the instances in the document. Super bonus points for the existing “Enable
operators and wildcards” setting, and more than one search term. It really helps understand the
document when I can easily identify labels across the page. I often use the standard search tool
for this, and there are two issues: a) it jumps to the first search term instead of just displaying
what it found, and b) the highlight color is sometimes very hard to see. An option to flash the
found locations in the document would help that (I can imagine a little bell icon button that
violently flashes the result highlights for a second).`)}</li>
        <li>{rich(`{{b|Go to page}} currently exists as a shortcut (Command+Option+Shift+P), but I’d really like a quick
interactive page indicator somewhere. Also, it’d be amazing if a little label would pop up while
you’re scrolling and tell you what page you’re on.`)}</li>
      </List>
      <P>{`What I really like about the DTP viewer is that it loads and scrolls and searches very quickly. The
fewer milliseconds it takes to load, the better I keep my focus.`}</P>
      <P>Thanks for considering!</P>
      <Tools />
    </Post>
  </Site>
);

const PAGES: [string, () => React.JSX.Element][] = [
  ['CSS for Markdown, blockquote...', Blockquotes],
  ['CSS for Markdown, fonts and...', Fonts],
  ['CSS for Markdown, write your...', WriteOwn],
  ['CSS for Markdown, the beginn...', Beginning],
  ['CSS for Markdown, styling tabl...', Tables],
  ['CSS for Markdown, printing -...', Printing],
  ['Snippets - DEVONthink / Feed...', Snippets],
  ['Markdown syntax highlighting...', Syntax],
  ['Copy link to a part (e.g. page)...', CopyLink],
  ['After OCR, PDF reduces size a...', Ocr],
  ['Set preferred width when capt...', PreferredWidth],
  ['PDF viewer navigation improve...', Navigation],
];

export default function App() {
  return (
    <Desktop>
      <Global />
      <Window>
        <Toolbar>
          <Lights>
            {['Close', 'Minimize', 'Zoom'].map((label) => <Light key={label} aria-label={label} />)}
          </Lights>
          <TabStrip>
            {Array.from({ length: 13 }, (_, i) => (
              <Tab key={i} aria-label={`Tab ${i + 1}`}>
                <FavTile $plain={i === 0}><Shell size={29} /></FavTile>
              </Tab>
            ))}
          </TabStrip>
          <AddressBar>
            <Search size={28} strokeWidth={2} />
            <AddressInput aria-label="Address" placeholder="Search or enter website name" />
            <MoreButton aria-label="More"><i /><i /><i /></MoreButton>
          </AddressBar>
          <InfoButton aria-label="Info"><InfoIcon /></InfoButton>
        </Toolbar>
        <SearchRow>
          <SearchTabs>
            <Search size={29} strokeWidth={2} />
            <input aria-label="Search Tabs" placeholder="Search Tabs" />
          </SearchTabs>
        </SearchRow>
        <Grid>
          {PAGES.map(([title, Content]) => (
            <Card key={title}>
              <CardBar>
                <CloseButton aria-label="Close tab"><X size={36} strokeWidth={1.4} /></CloseButton>
                <TabIcon><Shell size={28} /></TabIcon>
                <CardTitle>{title}</CardTitle>
              </CardBar>
              <Preview><Content /></Preview>
            </Card>
          ))}
        </Grid>
      </Window>
    </Desktop>
  );
}
